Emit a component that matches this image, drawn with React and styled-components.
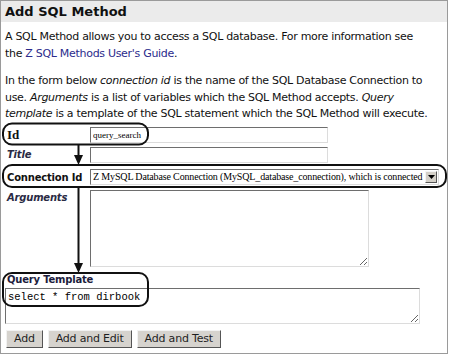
import React from 'react'
import styled, { createGlobalStyle } from "styled-components";

const Global = createGlobalStyle`
  body {
    margin: 0;
    background: #fff;
    font-family: "DejaVu Sans", Verdana, sans-serif;
  }
`;

const Frame = styled.div`
  position: relative;
  box-sizing: border-box;
  width: 448px;
  height: 354px;
  border: 1px solid #9a9a9a;
  background: #fff;
  overflow: hidden;
`;

const Header = styled.div`
  height: 21px;
  background: #ebebeb;
  padding-left: 4px;
  font-size: 13px;
  font-weight: bold;
  line-height: 22px;
  color: #111;
`;

const Body = styled.div`
  padding: 0 4px;
`;

const Text = styled.p`
  margin: ${p => p.$top || 0}px 0 0;
  font-size: 11px;
  letter-spacing: -0.3px;
  line-height: 16.5px;
  color: #111;
  white-space: nowrap;
`;

const Link = styled.a`
  color: #2b2b8c;
  text-decoration: none;
`;

const Form = styled.div`
  display: grid;
  grid-template-columns: 85px auto;
  align-items: start;
  row-gap: 4px;
  margin-top: 4px;
`;

const Label = styled.div`
  padding-left: 2px;
  padding-top: ${p => p.$pt || 1}px;
  font-family: ${p => p.$serif ? '"Liberation Serif", serif' : '"DejaVu Sans", sans-serif'};
  font-size: ${p => p.$serif ? 13 : 10}px;
  font-weight: bold;
  font-style: ${p => p.$italic ? 'italic' : 'normal'};
  color: ${p => p.$italic ? '#2a2a44' : '#111'};
  letter-spacing: ${p => p.$serif ? 0 : -0.2}px;
  white-space: nowrap;
  line-height: 14px;
`;

const Input = styled.input`
  box-sizing: border-box;
  width: 238px;
  height: 16px;
  margin: 0;
  padding: 0 2px;
  border: 1px solid;
  border-color: #6e6e6e #dcdcdc #dcdcdc #6e6e6e;
  font-family: "Liberation Serif", serif;
  font-size: 9px;
  color: #000;
  outline: none;
`;

const Select = styled.div`
  box-sizing: border-box;
  display: flex;
  align-items: center;
  width: 349px;
  height: 16px;
  margin-top: 2px;
  border: 1px solid;
  border-color: #6e6e6e #dcdcdc #dcdcdc #6e6e6e;
  padding-left: 2px;
`;

const SelectText = styled.span`
  flex: 1;
  overflow: hidden;
  white-space: nowrap;
  font-family: "Liberation Serif", serif;
  font-size: 10px;
  letter-spacing: -0.15px;
  color: #000;
`;

const DropBtn = styled.span`
  box-sizing: border-box;
  display: flex;
  align-items: center;
  justify-content: center;
  width: 12px;
  height: 12px;
  margin-right: 1px;
  background: #d4d0c8;
  border: 1px solid;
  border-color: #f4f4f4 #555 #555 #f4f4f4;
`;

const Area = styled.textarea`
  box-sizing: border-box;
  display: block;
  width: ${p => p.$w}px;
  height: ${p => p.$h}px;
  margin: ${p => p.$mt || 0}px 0 0;
  padding: 1px 2px;
  border: 1px solid;
  border-color: #6e6e6e #dcdcdc #dcdcdc #6e6e6e;
  font-family: "Liberation Mono", monospace;
  font-size: 10.5px;
  line-height: 14px;
  color: #000;
  outline: none;
  resize: both;
`;

const Section = styled.div`
  margin-top: 5px;
`;

const SectionLabel = styled(Label)`
  color: #1c1c3c;
`;

const Buttons = styled.div`
  display: flex;
  gap: 5px;
  margin-top: 6px;
  padding-left: 1px;
`;

const Button = styled.button`
  height: 18px;
  padding: 0 7px;
  background: #d6d3ce;
  border: 1px solid;
  border-color: #f2f2f2 #555 #555 #f2f2f2;
  font-family: "DejaVu Sans", sans-serif;
  font-size: 11px;
  letter-spacing: -0.2px;
  color: #1e1e1e;
`;

const Overlay = styled.svg`
  position: absolute;
  top: -1px;
  left: -1px;
  pointer-events: none;
`;

const Arrow = ({ x, y1, y2 }) => (
  <g>
    <line x1={x} y1={y1} x2={x} y2={y2 - 8} stroke="#111" strokeWidth="2" />
    <polygon points={`${x - 4.5},${y2 - 10} ${x + 4.5},${y2 - 10} ${x},${y2}`} fill="#111" />
  </g>
);

const App = () => {
  return (
    <>
      <Global />
      <Frame>
        <Header>Add SQL Method</Header>
        <Body>
          <Text $top={7}>
            A SQL Method allows you to access a SQL database. For more information see<br />
            the <Link href="#">Z SQL Methods User's Guide</Link>.
          </Text>
          <Text $top={11}>
            In the form below <i>connection id</i> is the name of the SQL Database Connection to<br />
            use. <i>Arguments</i> is a list of variables which the SQL Method accepts. <i>Query</i><br />
            <i>template</i> is a template of the SQL statement which the SQL Method will execute.
          </Text>
          <Form>
            <Label $serif>Id</Label>
            <Input defaultValue="query_search" />
            <Label $italic>Title</Label>
            <Input />
            <Label $pt={4}>Connection Id</Label>
            <Select>
              <SelectText>Z MySQL Database Connection (MySQL_database_connection), which is connected</SelectText>
              <DropBtn>
                <svg width="7" height="4" viewBox="0 0 7 4"><polygon points="0,0 7,0 3.5,4" fill="#000" /></svg>
              </DropBtn>
            </Select>
            <Label $italic $pt={2}>Arguments</Label>
            <Area $w={279} $h={77} $mt={1} />
          </Form>
          <Section>
            <SectionLabel>Query Template</SectionLabel>
            <Area $w={415} $h={36} $mt={1} defaultValue="select * from dirbook" />
          </Section>
          <Buttons>
            <Button>Add</Button>
            <Button>Add and Edit</Button>
            <Button>Add and Test</Button>
          </Buttons>
        </Body>
        <Overlay width="450" height="356">
          <g fill="none" stroke="#111" strokeWidth="2">
            <rect x="3" y="123.5" width="145" height="21" rx="9" />
            <rect x="3" y="165" width="443" height="22" rx="9" />
            <rect x="3" y="273" width="145" height="33" rx="9" />
          </g>
          <Arrow x={78.5} y1={144.5} y2={165} />
          <Arrow x={78.5} y1={187} y2={273} />
        </Overlay>
      </Frame>
    </>
  )
}

export default App;
